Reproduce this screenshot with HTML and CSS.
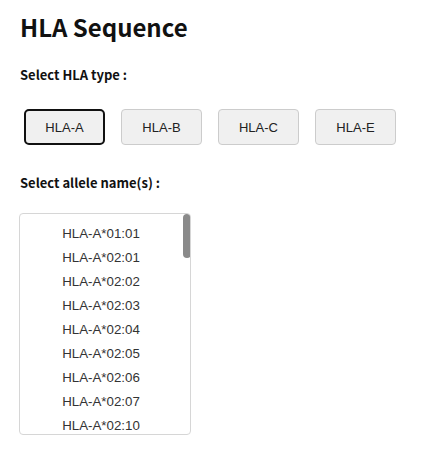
FILE: index.html
```html
<!DOCTYPE html>
<html>
<head>
<meta charset="utf-8">
<link rel="stylesheet" href="styles.css">
</head>
<body>
<h1 class="title">HLA Sequence</h1>
<div class="label label-type">Select HLA type :</div>
<div class="types">
  <button class="type-btn active">HLA-A</button>
  <button class="type-btn">HLA-B</button>
  <button class="type-btn">HLA-C</button>
  <button class="type-btn">HLA-E</button>
</div>
<div class="label label-allele">Select allele name(s) :</div>
<div class="allele-box">
  <div class="allele-list">
    <div class="item">HLA-A*01:01</div>
    <div class="item">HLA-A*02:01</div>
    <div class="item">HLA-A*02:02</div>
    <div class="item">HLA-A*02:03</div>
    <div class="item">HLA-A*02:04</div>
    <div class="item">HLA-A*02:05</div>
    <div class="item">HLA-A*02:06</div>
    <div class="item">HLA-A*02:07</div>
    <div class="item">HLA-A*02:10</div>
  </div>
  <div class="thumb"></div>
</div>
</body>
</html>
```
FILE: styles.css
```css
html, body {
  margin: 0;
  padding: 0;
  background: #ffffff;
}
body {
  padding: 12px 20px 0 20px;
  font-family: "Noto Sans CJK KR", "Noto Sans", sans-serif;
  color: #111111;
}
.title {
  margin: 0;
  font-size: 24px;
  line-height: 30px;
  font-weight: 700;
  color: #111111;
}
.label {
  font-size: 13px;
  line-height: 16px;
  font-weight: 700;
  color: #111111;
}
.label-type {
  margin-top: 25px;
}
.types {
  display: flex;
  gap: 16px;
  margin-top: 26px;
  padding-left: 4px;
}
.type-btn {
  box-sizing: border-box;
  width: 81px;
  height: 36px;
  margin: 0;
  padding: 0;
  background: #f0f0f0;
  border: 1px solid #cccccc;
  border-radius: 4px;
  font-family: "Liberation Sans", Arial, sans-serif;
  font-size: 13px;
  color: #222222;
}
.type-btn.active {
  border: 2px solid #111111;
  border-radius: 5px;
}
.label-allele {
  margin-top: 30px;
}
.allele-box {
  position: relative;
  box-sizing: border-box;
  margin-top: 22px;
  margin-left: -1px;
  width: 172px;
  height: 222px;
  border: 1px solid #d6d6d6;
  border-radius: 4px;
  overflow: hidden;
}
.allele-list {
  height: 100%;
  box-sizing: border-box;
  padding: 8px 8px 0 0;
  overflow: hidden;
}
.thumb {
  position: absolute;
  top: 0;
  right: -1px;
  width: 8px;
  height: 44px;
  background: #8a8a8a;
  border-radius: 4px;
}
.item {
  height: 24px;
  line-height: 24px;
  text-align: center;
  font-family: "Liberation Sans", Arial, sans-serif;
  font-size: 13.3px;
  color: #333333;
}
```
